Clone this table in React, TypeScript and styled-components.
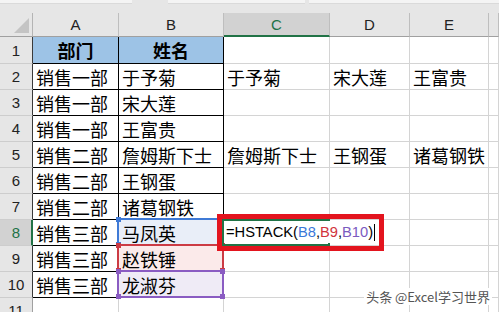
import React from 'react';
import styled, { createGlobalStyle, css } from 'styled-components';

const GlobalStyle = createGlobalStyle`
  html, body { margin: 0; padding: 0; background: #e6e6e6; }
  body { width: 499px; height: 312px; overflow: hidden; }
`;

const Page = styled.div`
  position: relative;
  width: 499px;
  height: 312px;
  overflow: hidden;
  background: #e6e6e6;
  display: flex;
  flex-direction: column;
  font-family: "Noto Sans CJK SC", "Noto Sans", sans-serif;
`;

const TopStrip = styled.div`
  display: flex;
  height: 4px;
  margin-bottom: 9px;
`;

const StripBox = styled.div<{ $w?: number }>`
  height: 3px;
  background: #f4f4f4;
  border-bottom: 1px solid #dadada;
  ${(p) => (p.$w ? css`width: ${p.$w}px; flex: none;` : css`flex: 1;`)}
`;

const StripGap = styled.div<{ $w: number }>`
  width: ${(p) => p.$w}px;
  flex: none;
`;

const Sheet = styled.div`
  display: grid;
  grid-template-columns: 33px 86px 105px 106px 80px 79px 1fr;
  grid-template-rows: 24px 27px repeat(10, 26px);
  background: #fff;
`;

const Corner = styled.div`
  position: relative;
  background: #e6e6e6;
  border-right: 1px solid #b4b4b4;
  border-bottom: 1px solid #a0a0a0;
  &::after {
    content: '';
    position: absolute;
    right: 3px;
    bottom: 3px;
    width: 0;
    height: 0;
    border-left: 15px solid transparent;
    border-bottom: 15px solid #c4c4c4;
  }
`;

const ColHeader = styled.div<{ $active?: boolean }>`
  display: flex;
  align-items: center;
  justify-content: center;
  background: ${(p) => (p.$active ? '#d2d2d2' : '#e6e6e6')};
  color: ${(p) => (p.$active ? '#217346' : '#222')};
  border-right: 1px solid #bebebe;
  border-bottom: ${(p) => (p.$active ? '2px solid #217346' : '1px solid #a0a0a0')};
  font-family: "Liberation Sans", Arial, sans-serif;
  font-size: 15px;
  padding-top: ${(p) => (p.$active ? '1px' : '0')};
`;

const RowHeader = styled.div<{ $active?: boolean; $dark?: boolean }>`
  display: flex;
  align-items: center;
  justify-content: center;
  background: ${(p) => (p.$active ? '#d2d2d2' : '#e6e6e6')};
  color: ${(p) => (p.$active ? '#217346' : '#222')};
  border-right: ${(p) =>
    p.$active ? '2px solid #217346' : p.$dark ? '1px solid #3a3a3a' : '1px solid #a0a0a0'};
  border-bottom: 1px solid #cdcdcd;
  font-family: "Liberation Sans", Arial, sans-serif;
  font-size: 15px;
  padding-left: ${(p) => (p.$active ? '1px' : '0')};
`;

const Cell = styled.div<{ $table?: boolean; $fill?: string; $head?: boolean }>`
  position: relative;
  display: flex;
  align-items: center;
  justify-content: ${(p) => (p.$head ? 'center' : 'flex-start')};
  padding: 0 3px;
  white-space: nowrap;
  font-size: 18px;
  font-weight: ${(p) => (p.$head ? 700 : 400)};
  color: #000;
  background: ${(p) => p.$fill || 'transparent'};
  border-right: 1px solid ${(p) => (p.$table ? '#000' : '#d4d4d4')};
  border-bottom: 1px solid ${(p) => (p.$table ? '#000' : '#d4d4d4')};
`;

const RangeFrame = styled.span<{ $color: string }>`
  position: absolute;
  left: -2px;
  top: -2px;
  width: 107px;
  height: 28px;
  box-sizing: border-box;
  border: 2px solid ${(p) => p.$color};
  z-index: 1;
  pointer-events: none;
`;

const Handle = styled.span<{ $color: string; $pos: 'tl' | 'tr' | 'bl' | 'br' }>`
  position: absolute;
  width: 5px;
  height: 5px;
  background: ${(p) => p.$color};
  ${(p) => (p.$pos[0] === 't' ? 'top: -3px;' : 'bottom: -3px;')}
  ${(p) => (p.$pos[1] === 'l' ? 'left: -3px;' : 'right: -3px;')}
`;

const ActiveFrame = styled.span`
  position: absolute;
  left: -2px;
  top: -1px;
  width: 108px;
  height: 27px;
  box-sizing: border-box;
  border: 2px solid #217346;
  z-index: 2;
`;

const EditBox = styled.span`
  position: absolute;
  left: 0;
  top: 1px;
  width: 153px;
  height: 22px;
  background: #fff;
  z-index: 3;
  display: flex;
  align-items: center;
  padding-left: 2px;
  box-sizing: border-box;
  font-family: "Liberation Sans", Arial, sans-serif;
  font-size: 14.7px;
  color: #000;
  white-space: nowrap;
`;

const Ref = styled.span<{ $color: string }>`
  color: ${(p) => p.$color};
`;

const Caret = styled.span`
  display: inline-block;
  width: 1px;
  height: 17px;
  margin-left: 1px;
  background: #000;
`;

const CallOut = styled.span`
  position: absolute;
  left: -7px;
  top: -6px;
  width: 167px;
  height: 37px;
  box-sizing: border-box;
  border: 5px solid #e3141e;
  z-index: 4;
  pointer-events: none;
`;

const Watermark = styled.div`
  position: absolute;
  right: 7px;
  top: 288px;
  height: 17px;
  padding: 0 2px;
  background: #fff;
  display: flex;
  align-items: center;
  font-size: 13px;
  color: #555;
  white-space: nowrap;
`;

const COLS = ['A', 'B', 'C', 'D', 'E', ''];

const DATA: string[][] = [
  ['部门', '姓名', '', '', ''],
  ['销售一部', '于予菊', '于予菊', '宋大莲', '王富贵'],
  ['销售一部', '宋大莲', '', '', ''],
  ['销售一部', '王富贵', '', '', ''],
  ['销售二部', '詹姆斯下士', '詹姆斯下士', '王钢蛋', '诸葛钢铁'],
  ['销售二部', '王钢蛋', '', '', ''],
  ['销售二部', '诸葛钢铁', '', '', ''],
  ['销售三部', '马凤英', '', '', ''],
  ['销售三部', '赵铁锤', '', '', ''],
  ['销售三部', '龙淑芬', '', '', ''],
  ['', '', '', '', ''],
];

const RANGES: Record<number, { color: string; fill: string }> = {
  7: { color: '#3f7ad6', fill: '#e9eef8' },
  8: { color: '#cc3b44', fill: '#fbeaea' },
  9: { color: '#8a5cc2', fill: '#efebf6' },
};

const Handles = ({ color }: { color: string }) => (
  <>
    <Handle $color={color} $pos="tl" />
    <Handle $color={color} $pos="tr" />
    <Handle $color={color} $pos="bl" />
    <Handle $color={color} $pos="br" />
  </>
);

export default function App() {
  return (
    <Page>
      <GlobalStyle />
      <TopStrip>
        <StripBox $w={132} />
        <StripGap $w={36} />
        <StripBox $w={137} />
        <StripGap $w={4} />
        <StripBox />
      </TopStrip>
      <Sheet>
        <Corner />
        {COLS.map((c, i) => (
          <ColHeader key={i} $active={c === 'C'}>
            {c}
          </ColHeader>
        ))}
        {DATA.map((row, r) => {
          const inTable = r < 10;
          const range = RANGES[r];
          return (
            <React.Fragment key={r}>
              <RowHeader $active={r === 7} $dark={inTable}>
                {r + 1}
              </RowHeader>
              <Cell $table={inTable} $head={r === 0} $fill={r === 0 ? '#9dc3e6' : undefined}>
                {row[0]}
              </Cell>
              <Cell
                $table={inTable}
                $head={r === 0}
                $fill={r === 0 ? '#9dc3e6' : range ? range.fill : undefined}
              >
                {row[1]}
                {range && (
                  <RangeFrame $color={range.color}>
                    <Handles color={range.color} />
                  </RangeFrame>
                )}
              </Cell>
              <Cell>
                {row[2]}
                {r === 7 && (
                  <>
                    <ActiveFrame />
                    <EditBox>
                      =HSTACK(
                      <Ref $color="#3a78d8">B8</Ref>,<Ref $color="#d1343d">B9</Ref>,
                      <Ref $color="#7b5bbf">B10</Ref>)
                      <Caret />
                    </EditBox>
                    <CallOut />
                  </>
                )}
              </Cell>
              <Cell>{row[3]}</Cell>
              <Cell>{row[4]}</Cell>
              <Cell />
            </React.Fragment>
          );
        })}
      </Sheet>
      <Watermark>头条 @Excel学习世界</Watermark>
    </Page>
  );
}
